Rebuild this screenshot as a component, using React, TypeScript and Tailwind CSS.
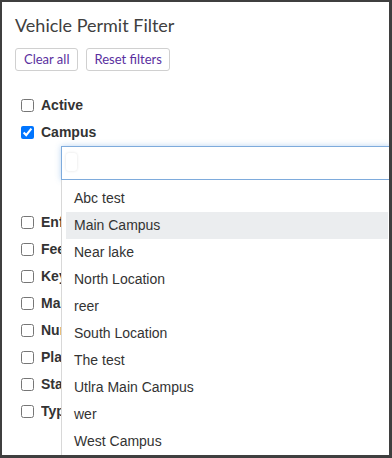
import React from "react";

const rowsAfter = ["Enforcement", "Fee type", "Keyword", "Make", "Number", "Plate", "Status", "Type"];
const options = [
  "Abc test",
  "Main Campus",
  "Near lake",
  "North Location",
  "reer",
  "South Location",
  "The test",
  "Utlra Main Campus",
  "wer",
  "West Campus",
];

function Row({ label, checked, clip }: { label: string; checked?: boolean; clip?: boolean }) {
  return (
    <div className="flex h-[27px] items-center pl-[19px]">
      <input type="checkbox" defaultChecked={checked} className="m-0 h-[13px] w-[13px]" />
      <span
        className={"ml-[7px] whitespace-nowrap text-[14px] font-bold text-[#333] " + (clip ? "w-[20px] overflow-hidden" : "")}
        style={{ fontFamily: '"Liberation Sans", Arial, sans-serif' }}
      >
        {label}
      </span>
    </div>
  );
}

export default function App() {
  return (
    <div className="h-[458px] w-[392px] bg-[#3f3f3f]">
      <div className="relative h-[458px] w-[392px] overflow-hidden border-t-2 border-l-2 border-r-[3px] border-b-[3px] border-[#3f3f3f] bg-white">
        <div className="pl-[13px] pt-[11px] text-[18px] leading-[24px] text-[#404040]" style={{ fontFamily: "Lato, sans-serif" }}>
          Vehicle Permit Filter
        </div>
        <div className="mt-[11px] flex gap-[8px] pl-[13px]" style={{ fontFamily: "Lato, sans-serif" }}>
          <button className="h-[23px] rounded-[3px] border border-[#d0d0d0] bg-white px-[8px] text-[13px] text-[#5a2fa0]">Clear all</button>
          <button className="h-[23px] rounded-[3px] border border-[#d0d0d0] bg-white px-[7px] text-[13px] text-[#5a2fa0]">Reset filters</button>
        </div>
        <div className="mt-[21px]">
          <Row label="Active" />
          <Row label="Campus" checked />
          <div className="relative ml-[59px] h-[63px]">
            <div className="flex h-[34px] w-[331px] border border-[#7eabdc] bg-white shadow-[0_0_6px_rgba(102,160,225,0.45)]">
              <div className="ml-[4px] mt-[6px] h-[18px] w-[11px] rounded-[3px] bg-white shadow-[0_0_3px_rgba(0,0,0,0.12)]" />
            </div>
            <div className="absolute left-0 top-[34px] z-10 h-[300px] w-[331px] border-l border-[#d8d8d8] bg-white px-[4px] pt-[5px]" style={{ fontFamily: '"Liberation Sans", Arial, sans-serif' }}>
              {options.map((o) => (
                <div key={o} className={"flex h-[27px] items-center pl-[8px] text-[14px] text-[#333] " + (o === "Main Campus" ? "bg-[#ebedef]" : "")}>
                  {o}
                </div>
              ))}
            </div>
          </div>
          {rowsAfter.map((r) => (
            <Row key={r} label={r} clip />
          ))}
        </div>
      </div>
    </div>
  );
}
